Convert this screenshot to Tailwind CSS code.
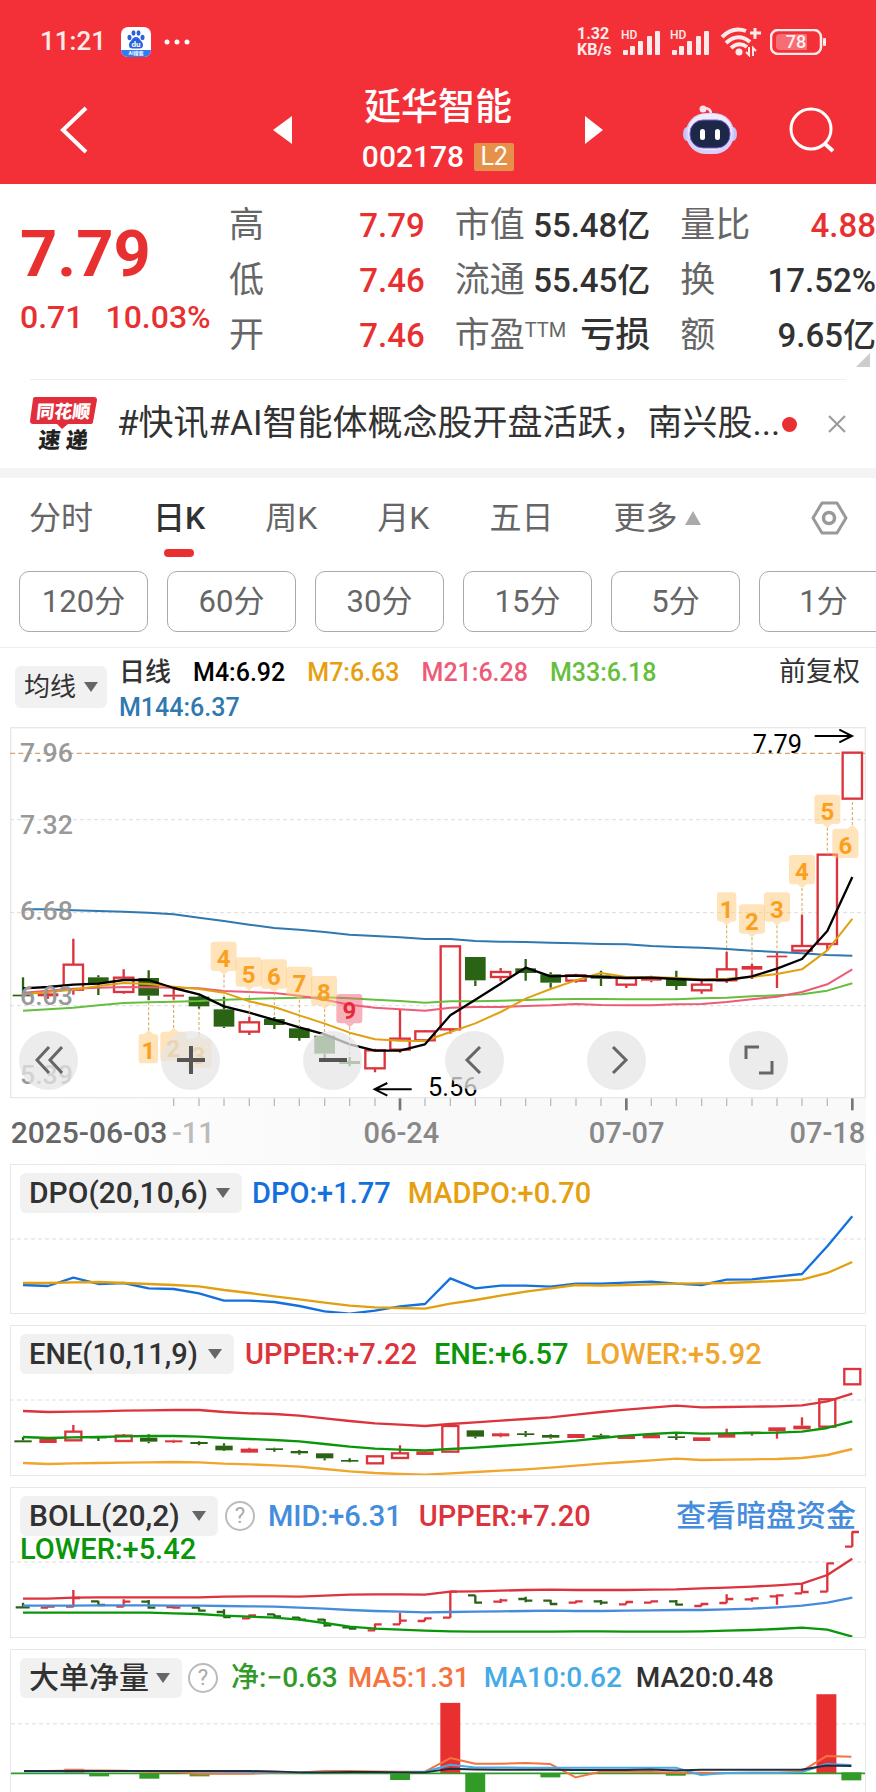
<!DOCTYPE html>
<html lang="zh-CN">
<head>
    <meta charset="UTF-8">
    <meta name="viewport" content="width=device-width, initial-scale=1.0">
    <title>延华智能 002178</title>
    <script src="https://cdn.jsdelivr.net/npm/@tailwindcss/browser@4"></script>
</head>
<body class="bg-white text-[#323232] font-['Roboto','Noto_Sans_CJK_SC',sans-serif] overflow-x-hidden">
    <header class="bg-[#f33037] text-white">
        <!-- status bar -->
        <div class="flex items-center h-[75px] pt-2 pl-[40px] pr-[50px]">
            <span class="text-[26px] font-medium text-white/90">11:21</span>
            <svg class="ml-[15px] w-[30px] h-[30px]" viewBox="0 0 30 30">
                <defs><clipPath id="app"><rect width="30" height="30" rx="7"/></clipPath></defs>
                <g clip-path="url(#app)">
                    <rect width="30" height="30" fill="#fff"/>
                    <rect y="23" width="30" height="7" fill="#2f7df0"/>
                    <g fill="#2b62dc">
                        <ellipse cx="8.500" cy="10.500" rx="2" ry="2.800"/>
                        <ellipse cx="12.500" cy="6" rx="2" ry="2.700"/>
                        <ellipse cx="17.500" cy="6" rx="2" ry="2.700"/>
                        <ellipse cx="21.500" cy="10.500" rx="2" ry="2.800"/>
                        <path d="M15 10c3 0 4 3 6 5 2 3 1 7-3 6.500h-6c-4 .5-5-3.500-3-6.500 2-2 3-5 6-5z"/>
                    </g>
                    <text x="15" y="20" font-size="8" font-weight="700" fill="#fff" text-anchor="middle">du</text>
                    <text x="15" y="28" font-size="5" font-weight="700" fill="#fff" text-anchor="middle">AI搜索</text>
                </g>
            </svg>
            <svg class="ml-[13px] w-[28px] h-[6px]" viewBox="0 0 28 6" fill="#fff"><circle cx="3" cy="3" r="2.500"/><circle cx="13" cy="3" r="2.500"/><circle cx="23" cy="3" r="2.500"/></svg>
            <div class="ml-auto flex items-center text-white/90">
                <div class="flex flex-col text-[16px] leading-[16px] font-bold w-[44px]"><span>1.32</span><span>KB/s</span></div>
                <svg class="w-[40px] h-[30px]" viewBox="0 -2 40 30" fill="currentColor">
                    <text x="0" y="10" font-size="12" font-weight="500">HD</text>
                    <rect x="2" y="21" width="5" height="5" rx="1"/><rect x="9" y="17" width="5" height="9" rx="1"/><rect x="17" y="12" width="5" height="14" rx="1"/><rect x="26" y="7" width="5" height="19" rx="1"/><rect x="34" y="2" width="5" height="24" rx="1"/>
                </svg>
                <svg class="ml-[9px] w-[40px] h-[30px]" viewBox="0 -2 40 30" fill="currentColor">
                    <text x="0" y="10" font-size="12" font-weight="500">HD</text>
                    <rect x="2" y="21" width="5" height="5" rx="1"/><rect x="9" y="17" width="5" height="9" rx="1"/><rect x="17" y="12" width="5" height="14" rx="1"/><rect x="26" y="7" width="5" height="19" rx="1"/><rect x="34" y="2" width="5" height="24" rx="1"/>
                </svg>
                <svg class="ml-[10px] w-[42px] h-[30px]" viewBox="0 0 42 30" fill="none" stroke="currentColor" stroke-width="4">
                    <path d="M2 10Q13 -1 26 4M6 16Q18 5 30 15M11 21Q19 14 27 20"/>
                    <circle cx="19" cy="25" r="3.500" fill="currentColor" stroke="none"/>
                    <path d="M30 6h11M35 1v11" stroke-width="3"/>
                    <path d="M29 20v8l-3-3M33 29v-8l3 3" stroke-width="2"/>
                </svg>
                <svg class="ml-[8px] w-[56px] h-[26px]" viewBox="0 0 56 26">
                    <rect x="1" y="1" width="50" height="24" rx="7" fill="none" stroke="currentColor" stroke-width="2.500"/>
                    <path d="M10 5h27v16h-27q-4 0-4-4v-8q0-4 4-4z" fill="#fff" fill-opacity=".3"/>
                    <rect x="53" y="9" width="3" height="8" rx="1" fill="currentColor"/>
                    <text x="26" y="19" font-size="18" font-weight="500" fill="currentColor" text-anchor="middle">78</text>
                </svg>
            </div>
        </div>
        <!-- title bar -->
        <div class="grid grid-cols-[1fr_auto_1fr] items-center pt-2 pb-[7px]">
            <button aria-label="返回" class="ml-[58px] justify-self-start">
                <svg class="w-[32px] h-[48px]" viewBox="0 0 32 48" fill="none" stroke="#fff" stroke-width="4"><path d="M28 2L5 24l23 22"/></svg>
            </button>
            <div class="flex items-center justify-between w-[332px]">
                <button aria-label="上一只"><svg class="w-[20px] h-[28px]" viewBox="0 0 20 28" fill="#fff"><path d="M20 0v28L1 14z"/></svg></button>
                <div class="text-center">
                    <h1 class="pt-[2px] text-[37px] leading-[46px] font-medium">延华智能</h1>
                    <div class="mt-[6px] flex items-center justify-center gap-[10px] h-[40px]">
                        <span class="text-[30px] leading-[40px] font-medium">002178</span>
                        <span class="bg-[#e6914a] text-[25px] leading-[28px] w-[40px] rounded-[2px]">L2</span>
                    </div>
                </div>
                <button aria-label="下一只"><svg class="w-[20px] h-[28px]" viewBox="0 0 20 28" fill="#fff"><path d="M1 0v28L19 14z"/></svg></button>
            </div>
            <div class="flex items-center justify-end gap-[50px] pr-[42px]">
                <button aria-label="智能助手">
                    <svg class="w-[56px] h-[52px]" viewBox="0 0 56 52">
                        <path d="M29 10q0-6-7-6" fill="none" stroke="#f1e9fb" stroke-width="2.500"/>
                        <circle cx="21" cy="5" r="3.500" fill="#fbe4ee"/>
                        <ellipse cx="5" cy="30" rx="4" ry="7" fill="#bcc4fb"/>
                        <ellipse cx="51" cy="30" rx="4" ry="7" fill="#bcc4fb"/>
                        <rect x="4" y="9" width="48" height="41" rx="20" fill="#d6d0fb"/>
                        <rect x="6" y="10" width="44" height="36" rx="18" fill="#f0ecfe"/>
                        <rect x="8" y="16" width="40" height="28" rx="13" fill="#1d2748" stroke="#7a5be0" stroke-width="1"/>
                        <rect x="18" y="25" width="5" height="11" rx="2.500" fill="#fff"/>
                        <rect x="33" y="25" width="5" height="11" rx="2.500" fill="#fff"/>
                    </svg>
                </button>
                <button aria-label="搜索">
                    <svg class="w-[46px] h-[46px]" viewBox="0 0 46 46" fill="none" stroke="#fff" stroke-width="3"><circle cx="23" cy="22" r="20"/><path d="M36 36l9 8" stroke-width="4"/></svg>
                </button>
            </div>
        </div>
    </header>

    <!-- quote -->
    <section class="relative flex pt-[14px] pb-[16px]">
        <div class="w-[229px] pl-[20px] pt-[24px] text-[#e93030] whitespace-nowrap">
            <div class="text-[65px] leading-[64px] font-bold">7.79</div>
            <div class="mt-[11px] text-[32px] leading-[40px] font-medium flex gap-[22px]"><span>0.71</span><span>10.03%</span></div>
        </div>
        <dl class="flex-1 grid grid-cols-3 gap-x-[30px] text-[33px] leading-[55px] font-medium whitespace-nowrap">
            <div class="flex justify-between"><dt class="text-[35px] font-normal text-[#666]">高</dt><dd class="text-[#e93030]">7.79</dd></div>
            <div class="flex justify-between"><dt class="text-[35px] font-normal text-[#666]">市值</dt><dd>55.48亿</dd></div>
            <div class="flex justify-between"><dt class="text-[35px] font-normal text-[#666]">量比</dt><dd class="text-[#e93030]">4.88</dd></div>
            <div class="flex justify-between"><dt class="text-[35px] font-normal text-[#666]">低</dt><dd class="text-[#e93030]">7.46</dd></div>
            <div class="flex justify-between"><dt class="text-[35px] font-normal text-[#666]">流通</dt><dd>55.45亿</dd></div>
            <div class="flex justify-between"><dt class="text-[35px] font-normal text-[#666]">换</dt><dd>17.52%</dd></div>
            <div class="flex justify-between"><dt class="text-[35px] font-normal text-[#666]">开</dt><dd class="text-[#e93030]">7.46</dd></div>
            <div class="flex justify-between"><dt class="flex text-[35px] font-normal text-[#666]">市盈<span class="text-[20px] leading-[44px]">TTM</span></dt><dd class="text-[35px]">亏损</dd></div>
            <div class="flex justify-between"><dt class="text-[35px] font-normal text-[#666]">额</dt><dd>9.65亿</dd></div>
        </dl>
        <svg class="absolute right-[6px] bottom-[12px] w-[14px] h-[14px]" viewBox="0 0 14 14" fill="#ccc"><path d="M14 0v14H0z"/></svg>
    </section>

    <!-- news -->
    <section class="mx-[30px] border-t border-[#eee] h-[89px] flex items-center">
        <svg class="shrink-0 w-[67px] h-[56px]" viewBox="0 0 67 56">
            <path d="M5 1h59q3 0 3 3l-4 22q0 2-3 2H38l-6 5-5-5H3q-3 0-3-3L3 3q0-2 2-2z" fill="#e22d3a"/>
            <g transform="skewX(-6)" font-weight="900" text-anchor="middle">
                <text x="35" y="22" font-size="18" fill="#fff">同花顺</text>
                <text x="38" y="52" font-size="22" fill="#222">速 递</text>
            </g>
        </svg>
        <a href="#" class="ml-[20px] flex-1 text-[35px] leading-[50px] whitespace-nowrap">#快讯#AI智能体概念股开盘活跃，南兴股...</a>
        <span class="shrink-0 w-[15px] h-[15px] rounded-full bg-[#e93030]"></span>
        <button aria-label="关闭" class="ml-[31px]"><svg class="w-[18px] h-[18px]" viewBox="0 0 18 18" stroke="#999" stroke-width="2"><path d="M1 1l16 16M17 1L1 17"/></svg></button>
    </section>
    <div class="h-[10px] bg-[#f4f4f4]"></div>

    <!-- period tabs -->
    <nav class="flex items-center gap-[60px] h-[78px] pt-[1px] pl-[29px] pr-[28px] text-[32px] text-[#666] whitespace-nowrap">
        <a href="#">分时</a>
        <a href="#" class="relative font-medium text-[#323232]">日K<span class="absolute left-1/2 -translate-x-1/2 -bottom-[15px] w-[30px] h-[8px] rounded-full bg-[#e93030]"></span></a>
        <a href="#">周K</a>
        <a href="#">月K</a>
        <a href="#">五日</a>
        <a href="#" class="flex items-center gap-[8px]">更多<svg class="w-[16px] h-[14px]" viewBox="0 0 16 14" fill="#aaa"><path d="M8 0l8 14H0z"/></svg></a>
        <button aria-label="设置" class="ml-auto"><svg class="w-[37px] h-[34px]" viewBox="0 0 37 34" fill="none" stroke="#999" stroke-width="3" stroke-linejoin="round"><path d="M11 2h15l9 15-9 15H11L2 17z"/><circle cx="18" cy="17" r="5.500" stroke-width="3.500"/></svg></button>
    </nav>
    <div class="flex gap-[19px] pt-[15px] pb-[15px] pl-[19px] overflow-hidden text-[31px] text-[#666]">
        <button class="shrink-0 w-[129px] h-[61px] pt-[2px] border border-[#aaa] rounded-[10px]">120分</button>
        <button class="shrink-0 w-[129px] h-[61px] pt-[2px] border border-[#aaa] rounded-[10px]">60分</button>
        <button class="shrink-0 w-[129px] h-[61px] pt-[2px] border border-[#aaa] rounded-[10px]">30分</button>
        <button class="shrink-0 w-[129px] h-[61px] pt-[2px] border border-[#aaa] rounded-[10px]">15分</button>
        <button class="shrink-0 w-[129px] h-[61px] pt-[2px] border border-[#aaa] rounded-[10px]">5分</button>
        <button class="shrink-0 w-[129px] h-[61px] pt-[2px] border border-[#aaa] rounded-[10px]">1分</button>
    </div>

    <!-- moving averages -->
    <section class="flex items-start border-t border-[#eee] pt-[7px] h-[80px] pl-[15px] pr-[16px] text-[26px] leading-[35px]">
        <div class="relative mt-[11px]">
            <select aria-label="均线" class="appearance-none h-[42px] w-[92px] pl-[9px] rounded-[6px] bg-[#f1f1f1]"><option>均线</option></select>
            <svg class="absolute right-[9px] top-[16px] w-[14px] h-[10px] pointer-events-none" viewBox="0 0 14 10" fill="#666"><path d="M0 0h14L7 10z"/></svg>
        </div>
        <div class="flex-1 ml-[12px] flex flex-wrap gap-x-[22px] text-[25px] font-medium">
            <span class="text-[26px]">日线</span>
            <span class="text-black">M4:6.92</span>
            <span class="text-[#e6a00f]">M7:6.63</span>
            <span class="text-[#ee5b78]">M21:6.28</span>
            <span class="text-[#66bf3c]">M33:6.18</span>
            <span class="text-[#2f78b0]">M144:6.37</span>
        </div>
        <a href="#" class="text-[27px]">前复权</a>
    </section>

    <!-- k line -->
    <section class="relative mx-[10px]">
        <svg id="kline" class="block w-full h-auto" viewBox="30 20 2568 1310"></svg>
        <div class="absolute left-[9px] bottom-[74px] flex gap-[83px]">
            <button aria-label="最左" class="w-[59px] h-[59px] rounded-full bg-[#e6e6e6]/75 flex items-center justify-center"><svg class="w-[28px] h-[28px]" viewBox="0 0 28 28" fill="none" stroke="#666" stroke-width="3"><path d="M14 1L2 14l12 13M27 1L15 14l12 13"/></svg></button>
            <button aria-label="放大" class="w-[59px] h-[59px] rounded-full bg-[#e6e6e6]/75 flex items-center justify-center"><svg class="w-[28px] h-[28px]" viewBox="0 0 28 28" fill="none" stroke="#555" stroke-width="4"><path d="M0 14h28M14 0v28"/></svg></button>
            <button aria-label="缩小" class="w-[59px] h-[59px] rounded-full bg-[#e6e6e6]/75 flex items-center justify-center"><svg class="w-[28px] h-[28px]" viewBox="0 0 28 28" fill="none" stroke="#555" stroke-width="4"><path d="M0 14h28"/></svg></button>
            <button aria-label="左移" class="w-[59px] h-[59px] rounded-full bg-[#e6e6e6]/75 flex items-center justify-center"><svg class="w-[28px] h-[28px]" viewBox="0 0 28 28" fill="none" stroke="#666" stroke-width="3"><path d="M19 1L6 14l13 13"/></svg></button>
            <button aria-label="右移" class="w-[59px] h-[59px] rounded-full bg-[#e6e6e6]/75 flex items-center justify-center"><svg class="w-[28px] h-[28px]" viewBox="0 0 28 28" fill="none" stroke="#666" stroke-width="3"><path d="M10 1l13 13-13 13"/></svg></button>
            <button aria-label="全屏" class="w-[59px] h-[59px] rounded-full bg-[#e6e6e6]/75 flex items-center justify-center"><svg class="w-[30px] h-[30px]" viewBox="0 0 30 30" fill="none" stroke="#666" stroke-width="3"><path d="M2 14V2h13M28 16v12H15"/></svg></button>
        </div>
    </section>

    <!-- indicators -->
    <div class="mx-[10px] flex flex-col gap-[11px] text-[29px] leading-[40px] font-medium whitespace-nowrap">
        <section class="relative outline outline-1 -outline-offset-1 outline-[#e8e8e8]">
            <svg id="dpo" class="block w-full h-auto" viewBox="30 40 2568 452"></svg>
            <div class="absolute top-[9px] left-[10px] flex items-center">
                <div class="relative">
                    <select aria-label="DPO" class="appearance-none h-[40px] pl-[9px] pr-[34px] rounded-[6px] bg-[#f1f1f1] text-[30px]"><option>DPO(20,10,6)</option></select>
                    <svg class="absolute right-[12px] top-[15px] w-[14px] h-[10px] pointer-events-none" viewBox="0 0 14 10" fill="#666"><path d="M0 0h14L7 10z"/></svg>
                </div>
                <span class="ml-[10px] text-[#1470dc]">DPO:+1.77</span>
                <span class="ml-[17px] text-[#e6a00f]">MADPO:+0.70</span>
            </div>
        </section>
        <section class="relative outline outline-1 -outline-offset-1 outline-[#e8e8e8]">
            <svg id="ene" class="block w-full h-auto" viewBox="30 525 2568 452"></svg>
            <div class="absolute top-[9px] left-[10px] flex items-center">
                <div class="relative">
                    <select aria-label="ENE" class="appearance-none h-[40px] pl-[9px] pr-[36px] rounded-[6px] bg-[#f1f1f1] text-[29px]"><option>ENE(10,11,9)</option></select>
                    <svg class="absolute right-[12px] top-[15px] w-[14px] h-[10px] pointer-events-none" viewBox="0 0 14 10" fill="#666"><path d="M0 0h14L7 10z"/></svg>
                </div>
                <span class="ml-[11px] text-[#dc333c]">UPPER:+7.22</span>
                <span class="ml-[17px] text-[#0a960a]">ENE:+6.57</span>
                <span class="ml-[17px] text-[#f0a52d]">LOWER:+5.92</span>
            </div>
        </section>
        <section class="relative outline outline-1 -outline-offset-1 outline-[#e8e8e8]">
            <svg id="boll" class="block w-full h-auto" viewBox="30 19 2568 452"></svg>
            <div class="absolute top-[9px] left-[10px] right-[10px]">
                <div class="flex items-center">
                    <div class="relative">
                        <select aria-label="BOLL" class="appearance-none h-[40px] pl-[9px] pr-[38px] rounded-[6px] bg-[#f1f1f1] text-[30px]"><option>BOLL(20,2)</option></select>
                        <svg class="absolute right-[12px] top-[15px] w-[14px] h-[10px] pointer-events-none" viewBox="0 0 14 10" fill="#666"><path d="M0 0h14L7 10z"/></svg>
                    </div>
                    <button aria-label="说明" class="ml-[7px] w-[30px] h-[30px] rounded-full border-2 border-[#bbb] text-[22px] leading-[26px] font-normal text-[#aaa]">?</button>
                    <span class="ml-[13px] text-[#468cdc]">MID:+6.31</span>
                    <span class="ml-[17px] text-[#dc333c]">UPPER:+7.20</span>
                    <a href="#" class="ml-auto text-[30px] text-[#468cdc]">查看暗盘资金</a>
                </div>
                <div class="leading-[26px] text-[#0a960a]">LOWER:+5.42</div>
            </div>
        </section>
        <section class="relative border-x border-t border-[#e8e8e8]">
            <svg id="netvol" class="block w-full h-auto" viewBox="30 508 2568 428"></svg>
            <div class="absolute top-[8px] left-[9px] flex items-center text-[28px]">
                <div class="relative">
                    <select aria-label="大单净量" class="appearance-none h-[40px] pl-[9px] pr-[33px] rounded-[6px] bg-[#f1f1f1] text-[30px]"><option>大单净量</option></select>
                    <svg class="absolute right-[12px] top-[15px] w-[14px] h-[10px] pointer-events-none" viewBox="0 0 14 10" fill="#666"><path d="M0 0h14L7 10z"/></svg>
                </div>
                <button aria-label="说明" class="ml-[6px] w-[30px] h-[30px] rounded-full border-2 border-[#bbb] text-[22px] leading-[26px] font-normal text-[#aaa]">?</button>
                <span class="ml-[13px] text-[#329b28]">净:−0.63</span>
                <span class="ml-[10px] text-[#f57341]">MA5:1.31</span>
                <span class="ml-[14px] text-[#46aae6]">MA10:0.62</span>
                <span class="ml-[14px]">MA20:0.48</span>
            </div>
        </section>
    </div>

    <script>
        // chart space is 3 units per pixel, one bar every 75.4 units
        const X = i => Math.round(69 + 75.4 * i);
        const RED = '#dc333c', GREEN = '#2b6314';

        const line = (ys, color, w = 6) =>
            `<polyline fill="none" stroke="${color}" stroke-width="${w}" stroke-linejoin="round" points="${ys.map((y, i) => X(i) + ',' + y).join(' ')}"/>`;
        const grid = (y, color = '#ddd', w = 3, dash = '12 9') =>
            `<path d="M30 ${y}H2598" stroke="${color}" stroke-width="${w}" stroke-dasharray="${dash}"/>`;

        // [up, high, top, bottom, low]
        function candles(data, half) {
            return data.map(([up, h, t, b, l], i) => {
                const x = X(i), c = up ? RED : GREEN;
                const hollow = up && b - t >= 13;
                const body = hollow
                    ? `<rect x="${x - half + 2}" y="${t}" width="${half * 2 - 4}" height="${b - t}" fill="#fff" stroke="${c}" stroke-width="7"/>`
                    : `<rect x="${x - half}" y="${t}" width="${half * 2}" height="${Math.max(b - t, 5)}" fill="${c}"/>`;
                return `<path d="M${x} ${h}V${t}M${x} ${b}V${l}" stroke="${c}" stroke-width="7"/>` + body;
            }).join('');
        }

        // number tag with a pointer; up = tag sits under the bar
        function tag(n, cx, top, tipX, end, up, hot) {
            const w = n === 1 ? 58 : 78, fill = hot ? '#f06478' : '#ffc878';
            const edge = up ? top : top + 88, tip = up ? top - 11 : top + 99;
            return `<path d="M${tipX} ${tip}V${end}" stroke="#d2a550" stroke-width="3" stroke-dasharray="9 6"/>
                <g fill="${fill}" fill-opacity=".5"><rect x="${cx - w / 2}" y="${top}" width="${w}" height="88" rx="10"/>
                <path d="M${tipX - 14} ${edge}L${tipX} ${tip}L${tipX + 14} ${edge}z"/></g>
                <text x="${cx}" y="${top + 76}" font-size="72" font-weight="700" text-anchor="middle" fill="${hot ? '#e62837' : '#faa01e'}">${n}</text>`;
        }

        const k = [
            [0, 771, 823, 828, 828], [1, 812, 819, 828, 835], [1, 655, 733, 808, 823], [0, 765, 771, 788, 824],
            [1, 747, 772, 815, 820], [0, 750, 773, 826, 840], [1, 806, 823, 829, 838], [0, 826, 829, 858, 865],
            [0, 830, 867, 919, 923], [1, 889, 906, 934, 944], [0, 890, 896, 914, 926], [0, 920, 924, 953, 961],
            [0, 940, 946, 1000, 1015], [0, 1010, 1022, 1031, 1038], [1, 985, 990, 1044, 1056], [1, 867, 955, 988, 997],
            [1, 930, 933, 960, 962], [1, 678, 678, 927, 940], [0, 710, 710, 780, 797], [1, 743, 755, 770, 783],
            [0, 716, 744, 758, 781], [0, 756, 762, 787, 802], [1, 760, 765, 781, 787], [0, 751, 765, 775, 797],
            [1, 768, 773, 793, 803], [1, 766, 770, 781, 786], [0, 751, 773, 797, 809], [1, 782, 793, 810, 820],
            [1, 694, 747, 780, 788], [1, 730, 737, 748, 776], [1, 696, 706, 711, 803], [1, 583, 677, 691, 691],
            [1, 403, 403, 671, 690], [1, 97, 97, 235, 235]
        ];
        const m4 = [804, 800, 793, 790, 779, 779, 803, 822, 858, 877, 899, 921, 942, 972, 991, 991, 972, 885, 838, 790, 742, 768, 766, 770, 773, 772, 776, 779, 779, 768, 745, 716, 632, 470];
        const m7 = [822, 815, 808, 797, 788, 791, 799, 806, 817, 843, 860, 885, 910, 937, 957, 961, 962, 935, 909, 875, 835, 806, 780, 758, 770, 770, 773, 777, 775, 770, 761, 747, 690, 596];
        const m21 = [817, 811, 805, 802, 800, 801, 802, 804, 812, 815, 818, 826, 838, 853, 862, 867, 871, 862, 860, 860, 857, 855, 851, 854, 855, 855, 852, 851, 845, 837, 829, 815, 792, 747];
        const m33 = [871, 867, 862, 855, 848, 846, 844, 842, 838, 836, 834, 832, 831, 834, 838, 842, 847, 843, 843, 841, 839, 837, 836, 836, 837, 837, 837, 834, 832, 828, 825, 822, 811, 789];
        const m144 = [567, 567, 570, 572, 574, 577, 582, 592, 602, 613, 623, 628, 635, 643, 647, 651, 656, 656, 662, 664, 665, 667, 669, 671, 672, 677, 680, 682, 686, 691, 695, 699, 704, 706];

        let ticks = '';
        for (let i = 6; i < 34; i++) {
            const major = i === 15 || i === 24 || i === 33;
            ticks += `<path d="M${X(i)} 1134V${major ? 1170 : 1157}" stroke="${major ? '#777' : '#bbb'}" stroke-width="${major ? 8 : 4}"/>`;
        }
        const price = (y, s) => `<text x="60" y="${y}" font-size="80" fill="#999" font-weight="500">${s}</text>`;

        document.getElementById('kline').innerHTML =
            `<defs><linearGradient id="fade"><stop offset="0" stop-color="#fff"/><stop offset=".4" stop-color="#f9f9f9"/></linearGradient></defs>
            <rect x="30" y="1133" width="2568" height="197" fill="url(#fade)"/>
            <rect x="32" y="22" width="2564" height="1110" fill="#fff" stroke="#e8e8e8" stroke-width="4"/>` +
            grid(298) + grid(577) + grid(856) + grid(99, '#d2a56e', 4, '15 10') +
            candles(k, 31) +
            line(m144, '#2f78b0') + line(m33, '#66bf3c') + line(m21, '#ee5b78') + line(m7, '#e0a010') + line(m4, '#000', 7) +
            price(125, '7.96') + price(340, '7.32') + price(598, '6.68') + price(855, '6.03') + price(1092, '5.39') +
            tag(1, 445, 941, X(5), 840, true) + tag(2, 520, 934, X(6), 838, true) + tag(3, 596, 955, X(7), 865, true) +
            tag(4, 671, 664, X(8), 830) + tag(5, 746, 711, X(9), 889) + tag(6, 822, 717, X(10), 890) +
            tag(7, 898, 739, X(11), 920) + tag(8, 972, 767, X(12), 940) + tag(9, 1048, 821, X(13), 1010, false, true) +
            tag(1, X(28), 516, X(28), 694) + tag(2, X(29), 552, X(29), 730) + tag(3, X(30), 516, X(30), 696) +
            tag(4, X(31), 404, X(31), 583) + tag(5, X(32), 223, X(32), 403) + tag(6, 2536, 325, X(33), 238, true) +
            `<g fill="none" stroke="#000" stroke-width="6"><path d="M1235 1107H1126M1162 1088L1124 1107L1162 1126"/><path d="M2444 47H2554M2518 28L2556 47L2518 66"/></g>
            <text x="1284" y="1128" font-size="76">5.56</text>
            <text x="2258" y="97" font-size="76">7.79</text>` +
            ticks +
            `<g font-size="87" fill="#888" font-weight="500">
                <text x="32" y="1267" font-size="90" fill="#666">2025-06-03</text>
                <text x="516" y="1267" fill="#bbb">-11</text>
                <text x="1204" y="1267" text-anchor="middle">06-24</text>
                <text x="1880" y="1267" text-anchor="middle">07-07</text>
                <text x="2596" y="1267" text-anchor="end">07-18</text>
            </g>`;

        document.getElementById('dpo').innerHTML = grid(265) +
            line([403, 406, 381, 400, 397, 413, 415, 428, 450, 450, 454, 466, 482, 489, 480, 467, 460, 383, 413, 405, 405, 408, 399, 399, 396, 393, 399, 403, 387, 386, 378, 370, 287, 197], '#1470dc', 7) +
            line([397, 397, 395, 394, 397, 400, 403, 407, 418, 427, 437, 446, 456, 465, 470, 472, 474, 459, 448, 435, 423, 413, 403, 405, 403, 401, 399, 398, 397, 394, 391, 387, 367, 334], '#e0a010', 7);

        document.getElementById('ene').innerHTML = grid(750) +
            candles([
                [0, 861, 871, 877, 877], [1, 866, 867, 879, 879], [1, 825, 845, 871, 873], [0, 859, 860, 864, 873],
                [1, 852, 857, 873, 875], [0, 853, 863, 875, 880], [1, 869, 871, 877, 879], [0, 874, 876, 882, 886],
                [0, 880, 887, 901, 903], [1, 893, 896, 908, 909], [0, 893, 895, 900, 905], [0, 900, 903, 910, 914],
                [0, 910, 910, 925, 931], [0, 925, 930, 934, 937], [1, 919, 919, 940, 940], [1, 886, 910, 924, 925],
                [1, 901, 904, 915, 915], [1, 828, 828, 905, 905], [0, 841, 841, 860, 865], [1, 848, 850, 859, 862],
                [0, 843, 850, 853, 860], [0, 853, 855, 863, 866], [1, 852, 852, 864, 864], [0, 851, 856, 861, 866],
                [1, 856, 856, 867, 867], [1, 855, 855, 865, 865], [0, 852, 859, 864, 870], [1, 862, 862, 873, 873],
                [1, 836, 852, 863, 863], [1, 845, 845, 851, 857], [1, 832, 832, 844, 866], [1, 802, 827, 838, 838],
                [1, 748, 748, 830, 830], [1, 657, 657, 703, 703]
            ], 26) +
            line([783, 786, 785, 784, 782, 781, 780, 780, 786, 790, 792, 797, 805, 813, 820, 824, 828, 822, 817, 812, 807, 802, 794, 786, 779, 773, 767, 772, 771, 770, 769, 766, 754, 731], RED, 7) +
            line([861, 864, 862, 861, 859, 858, 858, 860, 864, 867, 870, 874, 882, 890, 896, 899, 901, 897, 893, 888, 883, 878, 872, 864, 857, 852, 848, 851, 850, 849, 848, 845, 834, 814], '#0a960a', 7) +
            line([939, 942, 940, 939, 938, 937, 936, 937, 941, 943, 946, 950, 957, 964, 969, 972, 974, 970, 966, 962, 958, 953, 947, 941, 936, 931, 926, 930, 929, 928, 927, 924, 915, 897], '#f0a52d', 7);

        // [up, open, high, low, close]
        const ohlc = [
            [0, 380, 366, 380, 380], [1, 381, 378, 381, 378], [1, 378, 328, 380, 352], [0, 362, 360, 375, 373],
            [1, 378, 356, 378, 363], [0, 363, 358, 384, 381], [1, 379, 376, 384, 381], [0, 381, 380, 392, 390],
            [0, 394, 386, 410, 409], [1, 413, 402, 415, 404], [0, 401, 400, 409, 407], [0, 411, 409, 418, 417],
            [0, 417, 415, 438, 434], [0, 440, 436, 444, 444], [1, 449, 430, 449, 431], [1, 431, 397, 431, 420],
            [1, 421, 413, 421, 413], [1, 411, 333, 411, 333], [0, 344, 344, 368, 366], [1, 363, 354, 367, 359],
            [0, 355, 348, 365, 360], [0, 360, 357, 370, 370], [1, 366, 361, 368, 362], [0, 362, 358, 372, 366],
            [1, 371, 364, 371, 364], [1, 366, 362, 366, 362], [0, 362, 358, 374, 372], [1, 376, 368, 376, 370],
            [1, 367, 341, 367, 355], [1, 356, 351, 363, 353], [1, 347, 342, 372, 344], [1, 338, 310, 338, 334],
            [1, 333, 248, 333, 248], [1, 198, 154, 198, 154]
        ];
        document.getElementById('boll').innerHTML = grid(244) +
            ohlc.map(([up, o, h, l, c], i) => `<path d="M${X(i) - 22} ${o}H${X(i)}M${X(i)} ${h}V${l}M${X(i) - 2} ${c}H${X(i) + 20}" stroke="${up ? RED : GREEN}" stroke-width="7"/>`).join('') +
            line([354, 354, 351, 350, 350, 350, 350, 350, 348, 347, 347, 348, 345, 342, 341, 341, 342, 333, 332, 330, 328, 327, 328, 328, 328, 327, 326, 323, 321, 318, 314, 309, 283, 234], RED, 7) +
            line([375, 375, 375, 374, 374, 374, 375, 375, 376, 377, 378, 381, 384, 388, 391, 393, 395, 394, 393, 392, 391, 390, 391, 391, 390, 389, 388, 388, 386, 384, 380, 375, 366, 351], '#468cdc', 7) +
            line([396, 396, 396, 396, 396, 396, 398, 400, 405, 408, 411, 417, 427, 438, 444, 447, 450, 452, 453, 453, 453, 453, 452, 452, 453, 453, 453, 452, 450, 448, 445, 441, 447, 468], '#0a960a', 7);

        // bar index, top, bottom, colour
        const bars = [
            [2, 865, 879, '#e98070'], [3, 879, 888, '#329b28'], [5, 879, 895, '#329b28'], [7, 879, 888, '#6e9628'],
            [15, 879, 899, '#329b28'], [17, 667, 879, '#e93030'], [18, 879, 940, '#329b28'], [21, 879, 891, '#329b28'],
            [26, 879, 886, '#329b28'], [32, 641, 879, '#e93030'], [33, 876, 900, '#329b28']
        ];
        document.getElementById('netvol').innerHTML = grid(730) +
            bars.map(([i, t, b, c]) => `<rect x="${X(i) - 30}" y="${t}" width="60" height="${b - t}" fill="${c}"/>`).join('') +
            `<path d="M30 879H2598" stroke="#329b28" stroke-width="6"/>` +
            line([872, 872, 870, 870, 871, 874, 874, 880, 880, 880, 877, 876, 872, 872, 873, 874, 874, 833, 850, 850, 848, 851, 891, 874, 874, 875, 877, 877, 878, 877, 877, 874, 827, 829], '#f57341') +
            line([873, 873, 873, 872, 872, 872, 872, 873, 874, 876, 876, 876, 876, 876, 876, 876, 874, 853, 861, 861, 862, 862, 862, 862, 862, 862, 862, 884, 878, 877, 877, 876, 851, 854], '#46aae6') +
            line([872, 872, 872, 872, 872, 872, 872, 872, 872, 872, 873, 876, 876, 875, 875, 876, 876, 865, 867, 868, 868, 868, 869, 869, 869, 867, 870, 868, 868, 868, 868, 868, 855, 857], '#222c3c');
    </script>
</body>
</html>
